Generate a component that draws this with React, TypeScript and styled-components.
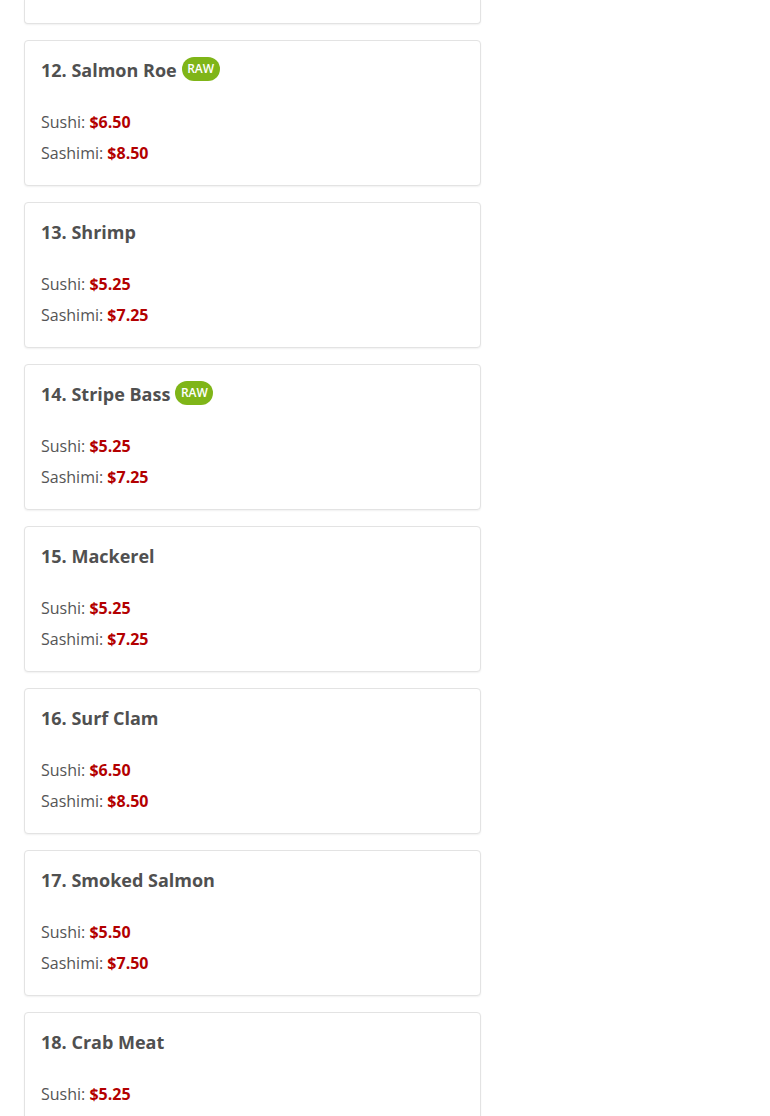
import React from 'react'
import styled, { createGlobalStyle } from 'styled-components'

const GlobalStyle = createGlobalStyle`
  body {
    margin: 0;
    background: #fff;
    font-family: 'Open Sans', 'Liberation Sans', sans-serif;
    color: #555;
  }
`

interface MenuItem {
  num: number
  name: string
  raw?: boolean
  sushi: string
  sashimi: string
}

const items: MenuItem[] = [
  { num: 12, name: 'Salmon Roe', raw: true, sushi: '$6.50', sashimi: '$8.50' },
  { num: 13, name: 'Shrimp', sushi: '$5.25', sashimi: '$7.25' },
  { num: 14, name: 'Stripe Bass', raw: true, sushi: '$5.25', sashimi: '$7.25' },
  { num: 15, name: 'Mackerel', sushi: '$5.25', sashimi: '$7.25' },
  { num: 16, name: 'Surf Clam', sushi: '$6.50', sashimi: '$8.50' },
  { num: 17, name: 'Smoked Salmon', sushi: '$5.50', sashimi: '$7.50' },
  { num: 18, name: 'Crab Meat', sushi: '$5.25', sashimi: '$7.25' },
]

const List = styled.div`
  display: flex;
  flex-direction: column;
  gap: 16px;
  width: 457px;
  padding: 0 0 0 24px;
`

const Card = styled.div`
  box-sizing: border-box;
  background: #fff;
  border: 1px solid #e3e3e3;
  border-radius: 4px;
  box-shadow: 0 1px 2px rgba(0, 0, 0, 0.06);
  padding: 16px;
`

const CardTail = styled(Card)`
  height: 24px;
  padding: 0;
  border-top: 0;
  border-top-left-radius: 0;
  border-top-right-radius: 0;
`

const Title = styled.h3`
  display: flex;
  align-items: center;
  gap: 5px;
  margin: 0 0 24px;
  font-size: 18px;
  line-height: 26px;
  font-weight: 700;
  color: #505050;
`

const RawBadge = styled.span`
  display: inline-flex;
  align-items: center;
  justify-content: center;
  width: 38px;
  height: 24px;
  margin-top: -2px;
  border-radius: 12px;
  background: #7fb518;
  color: #fff;
  font-size: 12px;
  font-weight: 600;
`

const PriceRow = styled.div`
  font-size: 16px;
  line-height: 31px;
  color: #555;
`

const Price = styled.strong`
  color: #b30000;
  font-weight: 700;
`

const App = () => (
  <>
    <GlobalStyle />
    <List>
      <CardTail />
      {items.map((item) => (
        <Card key={item.num}>
          <Title>
            {item.num}. {item.name}
            {item.raw && <RawBadge>RAW</RawBadge>}
          </Title>
          <PriceRow>
            Sushi: <Price>{item.sushi}</Price>
          </PriceRow>
          <PriceRow>
            Sashimi: <Price>{item.sashimi}</Price>
          </PriceRow>
        </Card>
      ))}
    </List>
  </>
)

export default App
